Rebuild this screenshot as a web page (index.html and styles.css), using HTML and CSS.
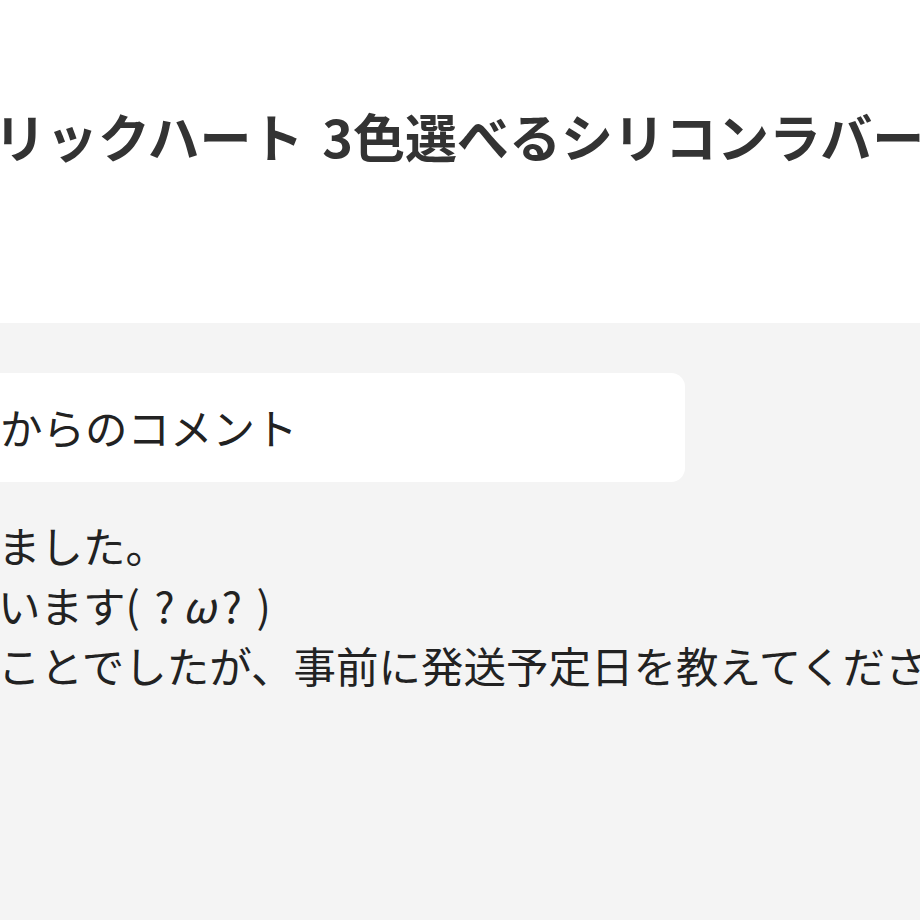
FILE: index.html
```html
<!DOCTYPE html>
<html lang="ja">
<head>
    <meta charset="UTF-8">
    <title>クリックハート 3色選べるシリコンラバーブレスレット</title>
    <link rel="stylesheet" href="styles.css">
</head>
<body>
<div class="page">
    <div class="item-head">
        <h1 class="item-name">クリックハート 3色選べるシリコンラバーブレスレット</h1>
    </div>

    <div class="review">
        <div class="review-label">ショップからのコメント</div>

        <div class="review-body">
            <p>ました。</p>
            <p>います( ?<span class="kao">ω</span>? )</p>
            <p>ことでしたが、事前に発送予定日を教えてくださいました。</p>
        </div>
    </div>
</div>
</body>
</html>
```

FILE: styles.css
```css
html, body {
    margin: 0;
    padding: 0;
}

body {
    font-family: "Noto Sans CJK JP", "Noto Sans", sans-serif;
    color: #333;
    background: #fff;
    overflow: hidden;
    width: 920px;
    height: 920px;
}

.page {
    white-space: nowrap;
}

.item-head {
    height: 323px;
    box-sizing: border-box;
    padding-top: 106px;
}

.item-name {
    margin: 0 0 0 -58px;
    font-size: 52px;
    line-height: 60px;
    font-weight: bold;
    word-spacing: 7px;
    color: #333;
}

.review {
    background: #f4f4f4;
    height: 597px;
    padding-top: 50px;
    box-sizing: border-box;
}

.review-label {
    background: #fff;
    border-radius: 14px;
    margin-left: -200px;
    width: 885px;
    height: 109px;
    box-sizing: border-box;
    padding: 24px 0 0 30px;
    font-size: 42.5px;
    line-height: 60px;
    color: #222;
}

.review-body {
    margin: 33px 0 0 -2px;
    font-size: 42.5px;
    line-height: 60px;
    word-spacing: 5px;
    color: #222;
}

.review-body p {
    margin: 0;
}

.kao {
    font-style: italic;
    padding: 0 6px 0 8px;
}
```
